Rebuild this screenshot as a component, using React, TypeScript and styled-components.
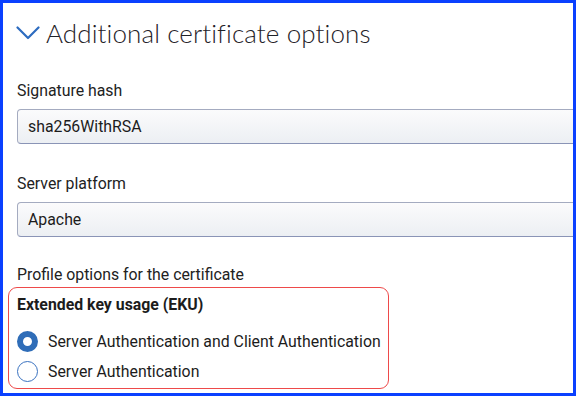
import styled, { createGlobalStyle } from 'styled-components';

const GlobalStyle = createGlobalStyle`
  html, body {
    margin: 0;
    padding: 0;
    background: #ffffff;
  }
`;

const Frame = styled.div`
  box-sizing: border-box;
  width: 576px;
  height: 396px;
  border: 3px solid #0a40ff;
  overflow: hidden;
  background: #ffffff;
  font-family: Roboto, 'Liberation Sans', sans-serif;
  color: #222222;
`;

const Content = styled.div`
  padding: 0 0 0 5px;
`;

const SectionHeader = styled.div`
  display: flex;
  align-items: center;
  gap: 6px;
  height: 58px;
  padding: 2px 0 0 8px;
  box-sizing: border-box;
`;

const Title = styled.h2`
  margin: 0;
  font-family: Lato, 'Open Sans', sans-serif;
  font-weight: 300;
  font-size: 26px;
  color: #1f2228;
  letter-spacing: 0.1px;
`;

const Field = styled.div<{ $gapTop: number }>`
  display: flex;
  flex-direction: column;
  gap: 8px;
  padding-left: 9px;
  margin-top: ${p => p.$gapTop}px;
`;

const Label = styled.div`
  font-size: 15.85px;
  line-height: 20px;
  color: #222222;
`;

const Select = styled.div`
  box-sizing: border-box;
  height: 35px;
  margin-right: -10px;
  border: 1px solid #a4abc0;
  border-bottom-color: #8a94b6;
  border-radius: 4px;
  background: linear-gradient(#fbfbfc, #eceff3);
  display: flex;
  align-items: center;
  padding-left: 10px;
  font-size: 15.85px;
  color: #1c1c1c;
`;

const ProfileLabel = styled(Label)`
  margin: 28px 0 0 9px;
`;

const Highlight = styled.fieldset`
  box-sizing: border-box;
  width: 381px;
  margin: 2px 0 0 0;
  padding: 7px 0 0 8px;
  height: 102px;
  border: 1px solid #ee4a4a;
  border-radius: 9px;
`;

const GroupTitle = styled.div`
  font-weight: 700;
  font-size: 15.85px;
  line-height: 20px;
  color: #1c1c1c;
  margin-bottom: 11px;
`;

const Option = styled.label`
  display: flex;
  align-items: center;
  gap: 10px;
  height: 30px;
  font-size: 15.85px;
  color: #1c1c1c;
`;

const RadioDot = styled.span<{ $checked?: boolean }>`
  box-sizing: border-box;
  width: 21px;
  height: 21px;
  border-radius: 50%;
  border: ${p => (p.$checked ? '6px solid #2f6db8' : '1.2px solid #3a72c0')};
  background: #ffffff;
`;

const Chevron = () => (
  <svg width="24" height="14" viewBox="0 0 24 14">
    <path d="M1.5 1.5 L12 12 L22.5 1.5" fill="none" stroke="#2d6cc0" strokeWidth="2.2" strokeLinecap="round" strokeLinejoin="round" />
  </svg>
);

const options = [
  { label: 'Server Authentication and Client Authentication', checked: true },
  { label: 'Server Authentication', checked: false },
];

export default function App() {
  return (
    <>
      <GlobalStyle />
      <Frame>
        <Content>
          <SectionHeader>
            <Chevron />
            <Title>Additional certificate options</Title>
          </SectionHeader>
          <Field $gapTop={20}>
            <Label>Signature hash</Label>
            <Select>sha256WithRSA</Select>
          </Field>
          <Field $gapTop={30}>
            <Label>Server platform</Label>
            <Select>Apache</Select>
          </Field>
          <ProfileLabel>Profile options for the certificate</ProfileLabel>
          <Highlight>
            <GroupTitle>Extended key usage (EKU)</GroupTitle>
            {options.map(o => (
              <Option key={o.label}>
                <RadioDot $checked={o.checked} />
                {o.label}
              </Option>
            ))}
          </Highlight>
        </Content>
      </Frame>
    </>
  );
}
